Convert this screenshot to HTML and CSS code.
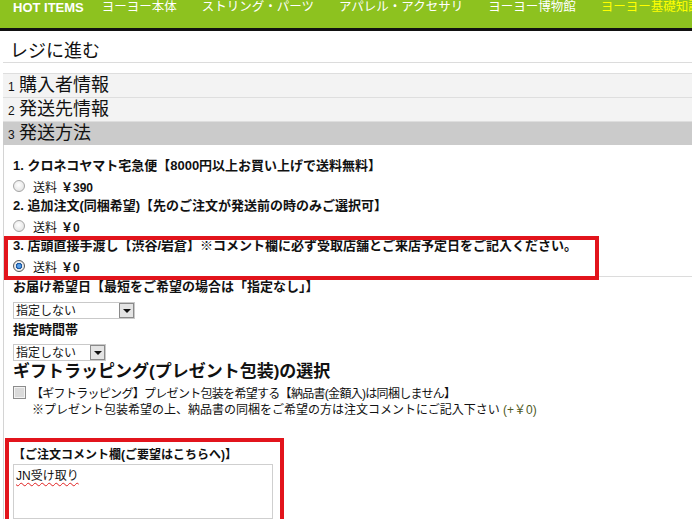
FILE: index.html
```html
<!DOCTYPE html>
<html lang="ja">

<head>
    <meta charset="UTF-8">
    <meta name="viewport" content="width=device-width, initial-scale=1.0">
    <title>レジに進む</title>
    <link rel="stylesheet" href="styles.css">
</head>

<body>
    <header class="topnav">
        <a class="nav-item hot" href="#">HOT ITEMS</a>
        <a class="nav-item" href="#">ヨーヨー本体</a>
        <a class="nav-item" href="#">ストリング・パーツ</a>
        <a class="nav-item" href="#">アパレル・アクセサリ</a>
        <a class="nav-item" href="#">ヨーヨー博物館</a>
        <a class="nav-item active" href="#">ヨーヨー基礎知識</a>
    </header>

    <div class="checkout">
        <h1 class="page-title">レジに進む</h1>

        <ul class="steps">
            <li class="step"><span class="step-no">1</span>購入者情報</li>
            <li class="step"><span class="step-no">2</span>発送先情報</li>
            <li class="step current"><span class="step-no">3</span>発送方法</li>
        </ul>

        <div class="step-body">
            <div class="ship-options">
                <div class="ship-option">
                    <p class="ship-name">1. クロネコヤマト宅急便【8000円以上お買い上げで送料無料】</p>
                    <label class="ship-fee"><input type="radio" name="ship">送料 <b>￥390</b></label>
                </div>
                <div class="ship-option">
                    <p class="ship-name">2. 追加注文(同梱希望)【先のご注文が発送前の時のみご選択可】</p>
                    <label class="ship-fee"><input type="radio" name="ship">送料 <b>￥0</b></label>
                </div>
                <div class="ship-option marked">
                    <p class="ship-name">3. 店頭直接手渡し【渋谷/岩倉】※コメント欄に必ず受取店舗とご来店予定日をご記入ください。</p>
                    <label class="ship-fee"><input type="radio" name="ship" checked>送料 <b>￥0</b></label>
                </div>
            </div>

            <p class="field-label">お届け希望日【最短をご希望の場合は「指定なし」】</p>
            <div class="select-box date">
                <select name="date">
                    <option>指定しない</option>
                </select>
                <span class="select-arrow"></span>
            </div>

            <p class="field-label">指定時間帯</p>
            <div class="select-box time">
                <select name="time">
                    <option>指定しない</option>
                </select>
                <span class="select-arrow"></span>
            </div>

            <h2 class="gift-title">ギフトラッピング(プレゼント包装)の選択</h2>
            <label class="gift-check"><input type="checkbox" name="gift">【ギフトラッピング】プレゼント包装を希望する【納品書(金額入)は同梱しません】</label>
            <p class="gift-note">※プレゼント包装希望の上、納品書の同梱をご希望の方は注文コメントにご記入下さい <span class="fee">(+￥0)</span></p>

            <div class="comment marked">
                <p class="comment-label">【ご注文コメント欄(ご要望はこちらへ)】</p>
                <div class="comment-box"><span class="typo">JN受け取り</span></div>
            </div>
        </div>
    </div>
</body>

</html>
```

FILE: styles.css
```css
* {
    box-sizing: border-box;
    margin: 0;
    padding: 0;
}

body {
    font-family: "Liberation Sans", "Noto Sans CJK JP", sans-serif;
    font-size: 12px;
    color: #111;
    background: #fff;
    overflow: hidden;
}

/* top navigation */
.topnav {
    display: flex;
    align-items: flex-start;
    gap: 25px;
    height: 31px;
    padding-left: 13px;
    background-color: #8dc21f;
    border-bottom: 3px solid #111;
    white-space: nowrap;
    overflow: hidden;
}

.nav-item {
    margin-top: 1px;
    line-height: 13px;
    font-size: 12.5px;
    color: #fff;
    text-decoration: none;
}

.nav-item.hot {
    margin-right: -7px;
    font-size: 13px;
    font-weight: bold;
}

.nav-item.active {
    color: #ffff00;
}

/* checkout */
.checkout {
    margin-left: 3px;
}

.page-title {
    margin-top: 11px;
    padding: 0 0 2px 7px;
    font-size: 18px;
    font-weight: normal;
    line-height: 18px;
    border-bottom: 1px solid #dcdcdc;
}

.steps {
    list-style: none;
    margin-top: 10px;
}

.step {
    height: 24px;
    padding-left: 5px;
    font-size: 18px;
    line-height: 23px;
    background-color: #f3f3f3;
    border-top: 1px solid #dedede;
}

.step.current {
    background-color: #cbcbcb;
}

.step-no {
    display: inline-block;
    width: 11px;
    font-size: 12px;
}

.step-body {
    padding: 11px 0 0 9px;
    border-left: 1px solid #d4d4d4;
}

.ship-options {
    border-bottom: 1px solid #dcdcdc;
}

.ship-option {
    position: relative;
}

.ship-name,
.field-label {
    font-size: 13px;
    font-weight: bold;
    line-height: 20px;
}

.ship-fee {
    display: flex;
    align-items: center;
    height: 20px;
}

.ship-fee b {
    margin-left: 4px;
}

input[type="radio"] {
    appearance: none;
    width: 12px;
    height: 12px;
    margin-right: 8px;
    border: 1px solid #a4a4a4;
    border-radius: 50%;
    background: radial-gradient(circle at 45% 40%, #fff, #dcdcdc);
}

input[type="radio"]:checked {
    border-color: #555;
    background: radial-gradient(circle, #5aa0e8 0 1.5px, #1c5aa6 2.5px 3px, #eaeaea 3.5px);
}

/* red annotation frame */
.marked::after {
    content: "";
    position: absolute;
    border: 4px solid #e2141c;
    pointer-events: none;
}

.ship-option.marked::after {
    top: 0;
    left: -9px;
    width: 587px;
    bottom: -4px;
}

.select-box {
    display: flex;
    height: 17px;
    margin: 5px 0 1px;
    border: 1px solid #c9c9c9;
    background: #fff;
}

.select-box.date {
    width: 122px;
}

.select-box.time {
    width: 93px;
    margin-top: 4px;
}

.select-box select {
    flex: 1;
    min-width: 0;
    appearance: none;
    border: 0;
    padding-left: 2px;
    font: 12px "Liberation Sans", "Noto Sans CJK JP", sans-serif;
    color: #111;
    background: transparent;
}

.select-arrow {
    display: flex;
    justify-content: center;
    align-items: center;
    width: 15px;
    border: 1px solid #8a8a8a;
    background: #e4e4e4;
}

.select-arrow::before {
    content: "";
    border-left: 4px solid transparent;
    border-right: 4px solid transparent;
    border-top: 4px solid #111;
}

.gift-title {
    font-size: 17px;
    font-weight: bold;
    line-height: 20px;
}

.gift-check {
    display: flex;
    align-items: center;
    height: 18px;
    margin-top: 1px;
    letter-spacing: -0.7px;
}

input[type="checkbox"] {
    appearance: none;
    width: 13px;
    height: 13px;
    margin-right: 5px;
    border: 1px solid #8c8c8c;
    background: #dadada;
    box-shadow: inset 0 0 0 1px #f2f2f2;
}

.gift-note {
    padding-left: 19px;
    line-height: 18px;
}

.fee {
    color: #4f5a24;
}

.comment {
    position: relative;
    margin-top: 19px;
    padding-top: 9px;
}

.comment.marked::after {
    top: 0;
    left: -8px;
    width: 271px;
    height: 77px;
}

.comment-label {
    font-weight: bold;
    line-height: 17px;
}

.comment-box {
    width: 260px;
    height: 55px;
    padding: 3px 2px;
    border: 1px solid #cfcfcf;
    line-height: 16px;
}

.typo {
    text-decoration: underline wavy #e02020;
    text-decoration-thickness: 1px;
    text-underline-offset: 2px;
}
```
